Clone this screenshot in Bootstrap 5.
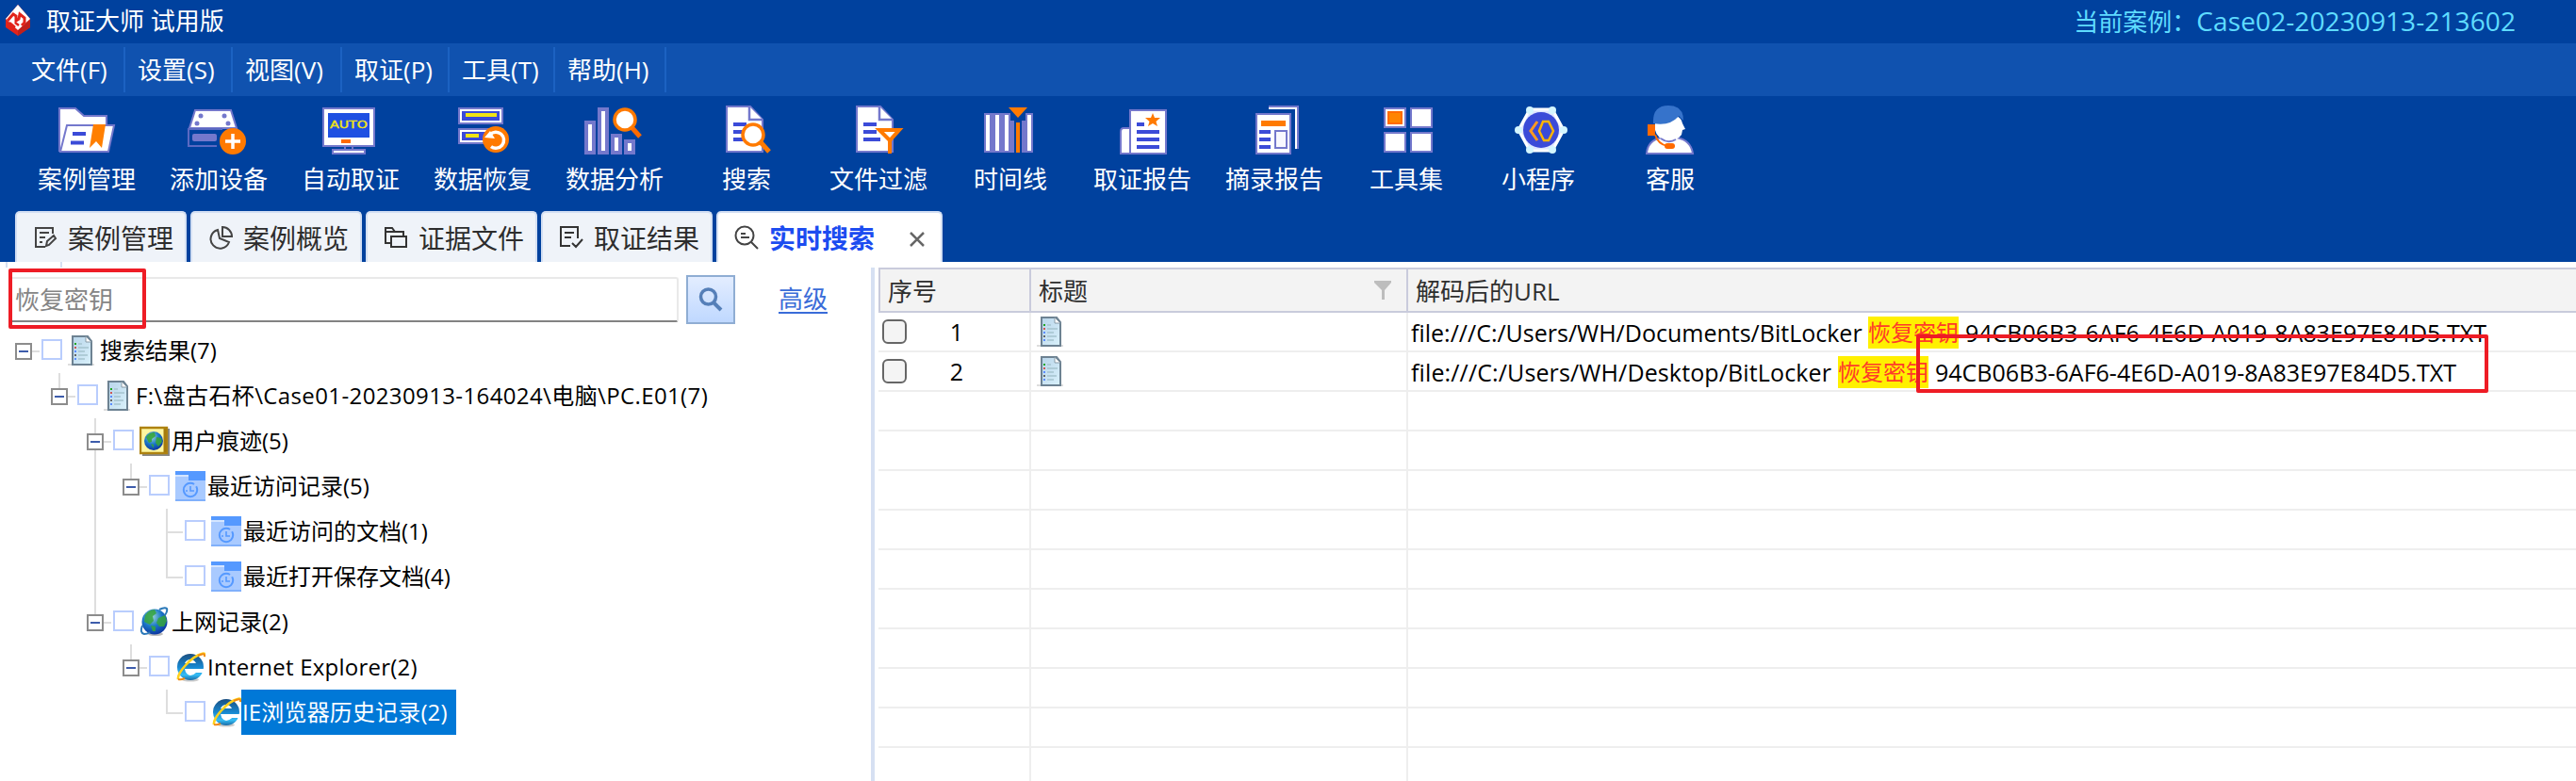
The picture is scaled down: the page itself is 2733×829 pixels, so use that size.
<!DOCTYPE html>
<html lang="zh-CN">
<head>
<meta charset="utf-8">
<title>取证大师 试用版</title>
<link rel="stylesheet" href="https://cdn.jsdelivr.net/npm/bootstrap@5.3.0/dist/css/bootstrap.min.css">
<style>
body{font-family:"Open Sans","Noto Sans CJK SC",sans-serif;font-size:24px;line-height:1;color:#000;width:2733px;height:829px;overflow:hidden;background:#fff}
svg{display:block;flex:none}
.lbl{white-space:pre;line-height:30px}
.titlebar{height:46px;background:#00419e;font-size:26px;color:#fff;padding:0 64px 2px 5px}
.casename{color:#5fdcff}
.casename b{font-weight:400;font-size:28px;letter-spacing:.1px}
.menubar{height:56px;background:#1052af;color:#fff;font-size:26px;padding:4px 0 4px 20px}
.menubar .mi{border-right:2px solid #1c62c2;padding-left:13px;height:48px}
.toolbar{height:122px;background:#00419e;padding:8px 0 0 22px;color:#fff;font-size:26px}
.toolbar .tool{width:140px}
.toolbar .lbl{margin-top:1px}
.tabbar{height:54px;background:#00419e;padding-left:16px;gap:4px}
.tabbar .tb{width:182px;height:54px;background:#eff3f9;border:2px solid #d3dff3;border-bottom:0;border-radius:5px 5px 0 0;font-size:28px;color:#2d2d2d;padding-left:17px}
.tabbar .tb svg{margin-right:11px}
.tabbar .lbl{padding-top:2px}
.tabbar .tb.on{width:240px;background:#fff;color:#1c4cf0;font-weight:700}
.side{width:924px;height:551px}
.stubs{height:6px;padding-left:6px;gap:56px}
.stubs i{width:2px;background:#d6e0f2}
.searchrow{padding:8px 0 0 9px;height:64px}
.field{width:711px;height:48px;margin-top:2px;border:2px solid #e9e9e9;border-bottom-color:#828282;border-radius:3px;color:#858585;font-size:26px;padding-left:5px}
.go{width:52px;height:52px;border:2px solid #8fadd3;border-radius:0;background:linear-gradient(#e3edff,#bfd8ff);margin-left:8px;padding:0}
.adv{color:#3a6cd8;font-size:26px;margin-left:46px;text-decoration:none;border-bottom:2px solid #3a6cd8;line-height:27px;margin-top:12px}
.tree{padding-left:16px}
.tn{height:48px}
.gd{width:38px;height:48px;position:relative;flex:none}
.nd{width:28px}
.gd.up::before,.gd.dn::after,.gd.full::before{content:"";position:absolute;left:8px;width:2px;background:#dedede}
.gd.up::before{top:0;height:24px}
.gd.dn::after{top:24px;height:24px}
.gd.full::before{top:0;height:48px}
.gd .stub{position:absolute;left:8px;top:24px;width:18px;height:2px;background:#dedede}
.gd .ex{position:absolute;z-index:1;left:0;top:16px;width:18px;height:18px;border:2px solid #8c8c8c;background:#fff}
.gd .ex::after{content:"";position:absolute;left:2px;top:6px;width:10px;height:2px;background:#3d5cab}
.cb{width:22px;height:22px;border:2px solid #b9cdfd;margin:0 6px 2px 0;flex:none}
.tn .lbl{margin-left:2px;height:48px;line-height:48px}
.tn .pick{background:#0078d7;color:#fff;width:228px;margin-left:0;padding-left:1px;letter-spacing:.15px}
.tn .path{letter-spacing:.38px}
.tn .app{letter-spacing:.22px}
.split{width:4px;height:545px;margin-top:6px;background:#d6e0f2}
.grid{margin:6px 0 0 4px;width:1801px;height:545px;overflow:hidden}
.gh{height:48px;background:#f3f3f3;border:solid #c9cbdc;border-width:2px 0 2px 2px;font-size:26px;color:#2f2f2f}
.gr{height:42px;border-bottom:2px solid #eee;font-size:25px}
.c1,.c2{border-right:2px solid #eee;flex:none;height:100%}
.c1{width:162px}.c2{width:400px}
.gh .c1,.gh .c2{border-color:#c9cbdc}
.gh .c1{width:160px}
.gh .c1,.gh .c3{padding-left:8px}.gh .c2{padding:0 16px 0 8px}
.gh .lbl{padding-top:2px}
.ck{width:26px;height:26px;border:2px solid #666;border-radius:6px;background:#f4f4f4;margin-left:4px}
.no{width:28px;margin-left:39px;text-align:center}
.gr .c2{padding-left:6px}
.gr .c3{padding-left:3px}
.gr .c3 .lbl{margin-top:2px}
.gr .c3 .src{width:478px}
.gr .c3 .src.alt{width:446px;letter-spacing:.13px}
.gr .c3 .hit{background:#fff000;color:#ff3b2a;font-size:24px;height:34px;line-height:33px;margin:2px 7px 0}
.frame{position:absolute;border:4px solid #ee1c25;border-radius:2px;z-index:5}
.frame.query{left:9px;top:285px;width:146px;height:64px}
.frame.key{left:2033px;top:355px;width:607px;height:62px}
</style>
</head>
<body>
<svg width="0" height="0" class="position-absolute">
<defs>
<linearGradient id="pg" x1="0" y1="0" x2="1" y2="1"><stop offset="0" stop-color="#b9d5ea"/><stop offset="1" stop-color="#d9f1fb"/></linearGradient>
<radialGradient id="gl" cx=".4" cy=".3" r=".75"><stop offset="0" stop-color="#9fd8d8"/><stop offset=".5" stop-color="#1b78c8"/><stop offset="1" stop-color="#0a2f9c"/></radialGradient>
<linearGradient id="ieg" x1="0" y1="0" x2="0" y2="1"><stop offset="0" stop-color="#1b4f80"/><stop offset=".5" stop-color="#1787d0"/><stop offset=".8" stop-color="#35bdf5"/><stop offset="1" stop-color="#1a6aa5"/></linearGradient>
<symbol id="doc" viewBox="0 0 32 32"><path d="M0 30h28v2H0z" fill="#ddd"/><path d="M5 1h16l4 5v25H5z" fill="url(#pg)" stroke="#6d8292" stroke-width="2"/><path d="M19 1v6h6z" fill="#fff" stroke="#8799a6"/><path d="M11 9h4M11 13h11M11 17h7M11 21h10M11 25h7" stroke="#a5c4ce" stroke-width="1.6"/><path d="M7 9h2" stroke="#22a522" stroke-width="2"/><path d="M7 13h2" stroke="#c55" stroke-width="2"/><path d="M7 17h2M7 25h2" stroke="#5a8cff" stroke-width="2"/><path d="M7 21h2" stroke="#666" stroke-width="2"/></symbol>
<symbol id="globe" viewBox="0 0 32 32"><ellipse cx="17" cy="29" rx="8" ry="2" fill="#bbb"/><circle cx="16" cy="16" r="13.5" fill="url(#gl)"/><path d="M6 9q4-6 10-6l2 4-4 3 1 5-4 4-6-3zM20 12l7-3 2 6-3 6-5 0-3-4zM12 20l5 1 0 5-3 0z" fill="#36a53c" opacity=".85"/><path d="M3 20q-3 8 2 9 3 0 6-2M21 3q6-3 8-1 1 3-2 7" fill="none" stroke="#2a78b8" stroke-width="2"/></symbol>
<symbol id="gbook" viewBox="0 0 32 32"><path d="M3 3h29v29H3z" fill="#888"/><path d="M1 2h28v27H1z" fill="#fdf6a0" stroke="#ae8210" stroke-width="2.4"/><path d="M27 3v25" stroke="#a67b0c" stroke-width="3"/><circle cx="15" cy="16" r="10" fill="url(#gl)"/><path d="M7 12q3-5 9-5l1 4-4 3 0 3-3 1zM18 12l5 1 1 4-4 5-3-4zM12 19l3 1 0 4z" fill="#36a53c" opacity=".9"/></symbol>
<symbol id="fold" viewBox="0 0 32 32"><path d="M0 0h32v32H0z" fill="#a9caff"/><path d="M0 0h32v10H14V5H0z" fill="#5599ff"/><path d="M0 4h14v2H0z" fill="#d4e5ff"/><path d="M0 30h32v2H0z" fill="#80b0fb"/><circle cx="16" cy="20" r="7.2" fill="none" stroke="#5599ff" stroke-width="2" stroke-dasharray="38 3"/><path d="M16 16v5h4M11 21h2" stroke="#5599ff" stroke-width="1.6" fill="none"/></symbol>
<symbol id="ie" viewBox="0 0 32 32"><ellipse cx="16" cy="29.5" rx="9" ry="2" fill="#ccc"/><circle cx="16" cy="16" r="14" fill="url(#ieg)"/><path d="M10 12q2-4 6-4t6 4z" fill="#fff"/><path d="M10 18h20v4h-8q-3 3-6 3-5-1-6-7z" fill="#fff"/><path d="M3 29q-1-5 8-15T28 2q4-2 3 3" fill="none" stroke="#ffd21e" stroke-width="2.6"/><path d="M3 29q3 1 7-1M24 4q8-4 7 1" fill="none" stroke="#f08a12" stroke-width="2"/></symbol>
</defs>
</svg>

<header class="titlebar d-flex align-items-center">
<svg width="28" height="34" viewBox="0 0 28 34"><path d="M14 0 27 15v9L14 33 1 24V15z" fill="#e2231a"/><path d="M14 26 27 15v9L14 33z" fill="#c0201b"/><path d="M14 0 27 15 14 27 1 15z" fill="#fff"/><path d="M3 17 9 10l3 2v5l3-2 1-5 5 4v5l-3 3" fill="none" stroke="#e2231a" stroke-width="3"/><path d="M5 19l6 5M11 19l4 3" stroke="#e2231a" stroke-width="2.5"/></svg>
<span class="lbl ms-3">取证大师 试用版</span>
<span class="lbl casename ms-auto">当前案例：<b>Case02-20230913-213602</b></span>
</header>

<nav class="menubar d-flex">
<div class="mi d-flex align-items-center" style="width:113px"><span class="lbl">文件(F)</span></div>
<div class="mi d-flex align-items-center" style="width:114px"><span class="lbl">设置(S)</span></div>
<div class="mi d-flex align-items-center" style="width:116px"><span class="lbl">视图(V)</span></div>
<div class="mi d-flex align-items-center" style="width:114px"><span class="lbl">取证(P)</span></div>
<div class="mi d-flex align-items-center" style="width:112px"><span class="lbl">工具(T)</span></div>
<div class="mi d-flex align-items-center" style="width:118px"><span class="lbl">帮助(H)</span></div>
</nav>

<section class="toolbar d-flex">
<div class="tool d-flex flex-column align-items-center"><svg width="80" height="64" viewBox="0 0 80 64"><path d="M11 51V5h17l9 8h24v10" fill="#fff" stroke="#7478cc" stroke-width="2"/><path d="M19 23h50l-6 28H12z" fill="#fff" stroke="#7478cc" stroke-width="2"/><path d="M25 32h14M23 41.5h14" stroke="#3b4bd8" stroke-width="4"/><path d="M47 22h13l-4 25-6-7-7 7z" fill="#ff7f00"/></svg><span class="lbl">案例管理</span></div>
<div class="tool d-flex flex-column align-items-center"><svg width="80" height="64" viewBox="0 0 80 64"><path d="M15 7h38l6 19H9z" fill="#fff" stroke="#7478cc" stroke-width="2"/><path d="M38 45H8V27h36" fill="none" stroke="#5b69c2" stroke-width="2"/><rect x="12" y="32" width="26" height="8" rx="2" fill="#7478cc"/><g fill="#7478cc"><circle cx="21" cy="13" r="2.5"/><circle cx="46" cy="13" r="2.5"/><circle cx="17" cy="21" r="2.5"/><circle cx="50" cy="21" r="2.5"/></g><circle cx="55" cy="40" r="14" fill="#ff7a00"/><path d="M55 32v16M47 40h16" stroke="#fff" stroke-width="3.5"/></svg><span class="lbl">添加设备</span></div>
<div class="tool d-flex flex-column align-items-center"><svg width="80" height="64" viewBox="0 0 80 64"><path d="M11 5h54v40H11z" fill="#fff" stroke="#7478cc" stroke-width="2"/><path d="M16 10h44v26H16z" fill="#1f50e2"/><text x="18" y="26" font-size="11" font-family="DejaVu Sans" fill="#f0e414" stroke="#f0e414" stroke-width=".4" textLength="40" lengthAdjust="spacingAndGlyphs">AUTO</text><path d="M30 38h10v4H30z" fill="#ff6a00"/><path d="M34 46v3M42 46v3" stroke="#7478cc" stroke-width="2"/><path d="M21 49h34v4H21z" fill="#fff" stroke="#7478cc" stroke-width="2"/></svg><span class="lbl">自动取证</span></div>
<div class="tool d-flex flex-column align-items-center"><svg width="80" height="64" viewBox="0 0 80 64"><path d="M15 5h46v16H15zM15 27h46v15H15z" fill="#3b4bd8" stroke="#7478cc" stroke-width="2"/><path d="M17 7h42v12H17zM17 29h30v11H17z" fill="#3b4bd8" stroke="#fff" stroke-width="2"/><path d="M22 12h33M22 34h14" stroke="#f0e414" stroke-width="4"/><circle cx="54" cy="38" r="14" fill="#ff7a00"/><path d="M55 47a8.500 8.500 0 1 0-9-9" fill="none" stroke="#fff" stroke-width="3.5" transform="rotate(40 54 38)"/><path d="M42 36l6-7 5 8z" fill="#fff"/></svg><span class="lbl">数据恢复</span></div>
<div class="tool d-flex flex-column align-items-center"><svg width="80" height="64" viewBox="0 0 80 64"><g fill="#fff" stroke="#7478cc" stroke-width="4"><path d="M10 20h8v32h-8zM24 6h8v46h-8zM38 34h8v18h-8zM52 40h8v12h-8z"/></g><path d="M58 25l9 10" stroke="#ff6a00" stroke-width="5"/><circle cx="51" cy="17" r="11" fill="#fff" stroke="#ff7a00" stroke-width="3.5"/></svg><span class="lbl">数据分析</span></div>
<div class="tool d-flex flex-column align-items-center"><svg width="80" height="64" viewBox="0 0 80 64"><path d="M19 3h25l13 14v34H19z" fill="#fff" stroke="#7478cc" stroke-width="2"/><path d="M43 3v14h14" fill="#fff" stroke="#7478cc" stroke-width="2.5"/><path d="M26 22h14M26 30h12M26 38h14" stroke="#3b4bd8" stroke-width="4"/><path d="M55 41l9 10" stroke="#ff7a00" stroke-width="5"/><circle cx="47" cy="33" r="11" fill="#fff" stroke="#ff7a00" stroke-width="3.5"/></svg><span class="lbl">搜索</span></div>
<div class="tool d-flex flex-column align-items-center"><svg width="80" height="64" viewBox="0 0 80 64"><path d="M17 3h25l13 14v34H17z" fill="#fff" stroke="#7478cc" stroke-width="2"/><path d="M41 3v14h14" fill="#fff" stroke="#7478cc" stroke-width="2.5"/><path d="M24 22h14M24 30h14M24 38h18" stroke="#3b4bd8" stroke-width="4"/><path d="M41 28h21L52 39z" fill="#fff" stroke="#ff7a00" stroke-width="4"/><path d="M52 38v15" stroke="#ff7a00" stroke-width="4"/></svg><span class="lbl">文件过滤</span></div>
<div class="tool d-flex flex-column align-items-center"><svg width="80" height="64" viewBox="0 0 80 64"><path d="M12 10h52v42H12z" fill="#7478cc"/><path d="M16 12v38M26 12v38M36 12v38M60 12v38" stroke="#fff" stroke-width="4"/><path d="M40 10h16v8h-4v34h-8V18h-4z" fill="#00419e"/><path d="M38 4h20L48 15z" fill="#ff7a00"/><path d="M48 20v32" stroke="#ff7a00" stroke-width="4"/></svg><span class="lbl">时间线</span></div>
<div class="tool d-flex flex-column align-items-center"><svg width="80" height="64" viewBox="0 0 80 64"><path d="M27 26h-7q-3 0-3 4v23h10z" fill="#fff" stroke="#7478cc" stroke-width="2"/><path d="M27 7h38v46H27z" fill="#fff" stroke="#7478cc" stroke-width="2"/><path d="M51 10l2 5h6l-4.500 4 1.500 5-5-3-5 3 1.500-5-4.500-4h6z" fill="#ff7a00"/><path d="M34 22h8M34 30h24M34 38h24M34 46h24" stroke="#3b4bd8" stroke-width="4"/></svg><span class="lbl">取证报告</span></div>
<div class="tool d-flex flex-column align-items-center"><svg width="80" height="64" viewBox="0 0 80 64"><path d="M34 3h31v45" fill="none" stroke="#7478cc" stroke-width="2"/><path d="M34 5h29v43" fill="none" stroke="#fff" stroke-width="2"/><path d="M21 11h36v42H21z" fill="#fff" stroke="#7478cc" stroke-width="2"/><path d="M26 21h26" stroke="#ff7a00" stroke-width="6"/><path d="M24 30h12M24 38h12M24 46h12" stroke="#3b4bd8" stroke-width="4"/><path d="M41 29h12v18H41z" fill="#f8f8ff" stroke="#7478cc" stroke-width="2"/></svg><span class="lbl">摘录报告</span></div>
<div class="tool d-flex flex-column align-items-center"><svg width="80" height="64" viewBox="0 0 80 64"><g fill="#fff" stroke="#7478cc" stroke-width="2"><path d="M17 5h22v20H17zM45 5h22v20H45zM17 31h22v20H17zM45 31h22v20H45z"/></g><path d="M21 9h14v12H21z" fill="#ff8400" stroke="#ff6a00" stroke-width="2"/></svg><span class="lbl">工具集</span></div>
<div class="tool d-flex flex-column align-items-center"><svg width="80" height="64" viewBox="0 0 80 64"><path d="M31 6h24l12 22-12 22H31L19 28z" fill="#dfe6ff" stroke="#fff" stroke-width="3"/><g fill="#d4f6ff"><circle cx="31" cy="7" r="4"/><circle cx="55" cy="7" r="4"/><circle cx="67" cy="28" r="4"/><circle cx="19" cy="28" r="4"/><circle cx="31" cy="49" r="4"/><circle cx="55" cy="49" r="4"/></g><circle cx="43" cy="28" r="19" fill="#3b4bd8"/><path d="M45 19h6l5 10-5 10h-5l-5-10z" fill="none" stroke="#ffb400" stroke-width="2.5"/><path d="M39 19l-7 10 7 10" fill="none" stroke="#ff9a20" stroke-width="3"/></svg><span class="lbl">小程序</span></div>
<div class="tool d-flex flex-column align-items-center"><svg width="80" height="64" viewBox="0 0 80 64"><path d="M15 53q1-14 16-17h16q15 3 17 17z" fill="#fff" stroke="#7478cc" stroke-width="2"/><path d="M24 20q13 1 22-7 6 2 7 8l3 6-3 1-1 5q-4 6-14 6-12-1-14-11z" fill="#fff"/><path d="M30 37q8 6 16 1" fill="none" stroke="#7478cc" stroke-width="2"/><path d="M22 21Q21 2 38 2q16 0 16 16l-5-5q-8 11-27 8z" fill="#3673cb"/><path d="M16 22h8v12h-8z" fill="#ff6a00"/><path d="M24 33q3 10 13 12" fill="none" stroke="#ff6a00" stroke-width="2"/><rect x="34" y="42" width="11" height="6" rx="3" fill="#ff6a00"/></svg><span class="lbl">客服</span></div>
</section>

<nav class="tabbar d-flex">
<div class="tb d-flex align-items-center"><svg width="26" height="26" viewBox="0 0 26 26" fill="none" stroke="#444" stroke-width="2"><path d="M21 9V3H3v20h10M7 8h10M7 13h6M7 18h3"/><path d="M14 22l1-5 7-6 2 3-7 7z"/></svg><span class="lbl">案例管理</span></div>
<div class="tb d-flex align-items-center"><svg width="26" height="26" viewBox="0 0 26 26" fill="none" stroke="#444" stroke-width="2"><path d="M10 5a10 10 0 1 0 12 13l-10-4z"/><path d="M15 2v10h10a10 10 0 0 0-10-10z"/></svg><span class="lbl">案例概览</span></div>
<div class="tb d-flex align-items-center"><svg width="26" height="26" viewBox="0 0 26 26" fill="none" stroke="#333" stroke-width="2"><path d="M7 19H2V3h7l3 4h9v4M2 7h10M8 12h16v11H8z"/></svg><span class="lbl">证据文件</span></div>
<div class="tb d-flex align-items-center"><svg width="26" height="26" viewBox="0 0 26 26" fill="none" stroke="#333" stroke-width="2"><path d="M12 22H2V2h18v12M6 8h10M6 13h7M14 19l4 4 7-8"/></svg><span class="lbl">取证结果</span></div>
<div class="tb on d-flex align-items-center"><svg width="26" height="26" viewBox="0 0 26 26" fill="none" stroke="#444" stroke-width="2"><circle cx="11" cy="11" r="9.5"/><path d="M7 9h5M7 13h9M18 18l7 7"/></svg><span class="lbl me-4">实时搜索</span><svg class="ms-2 mt-1 ps-0" width="24" height="16" viewBox="-5 0 24 16" stroke="#666" stroke-width="2.5"><path d="M1 1l14 14M15 1 1 15"/></svg></div>
</nav>

<main class="d-flex">
<aside class="side">
<div class="stubs d-flex"><i></i><i></i></div>
<div class="searchrow d-flex align-items-start">
<div class="field d-flex align-items-center"><span class="lbl">恢复密钥</span></div>
<button class="go btn d-flex align-items-center justify-content-center"><svg width="26" height="26" viewBox="0 0 26 26" fill="none" stroke="#557fb8" stroke-width="3.5"><circle cx="10.5" cy="10" r="8"/><path d="M16 16l8 8" stroke-width="4"/></svg></button>
<a class="adv">高级</a>
</div>
<div class="tree">
<div class="tn d-flex align-items-center"><div class="gd nd"><i class="ex"></i><i class="stub"></i></div><i class="cb"></i><svg width="32" height="32"><use href="#doc"/></svg><span class="lbl">搜索结果(7)</span></div>
<div class="tn d-flex align-items-center"><div class="gd"></div><div class="gd nd up"><i class="ex"></i><i class="stub"></i></div><i class="cb"></i><svg width="32" height="32"><use href="#doc"/></svg><span class="lbl path">F:\盘古石杯\Case01-20230913-164024\电脑\PC.E01(7)</span></div>
<div class="tn d-flex align-items-center"><div class="gd"></div><div class="gd"></div><div class="gd nd up dn"><i class="ex"></i><i class="stub"></i></div><i class="cb"></i><svg width="32" height="32"><use href="#gbook"/></svg><span class="lbl">用户痕迹(5)</span></div>
<div class="tn d-flex align-items-center"><div class="gd"></div><div class="gd"></div><div class="gd full"></div><div class="gd nd up"><i class="ex"></i><i class="stub"></i></div><i class="cb"></i><svg width="32" height="32"><use href="#fold"/></svg><span class="lbl">最近访问记录(5)</span></div>
<div class="tn d-flex align-items-center"><div class="gd"></div><div class="gd"></div><div class="gd full"></div><div class="gd"></div><div class="gd nd full"><i class="stub"></i></div><i class="cb"></i><svg width="32" height="32"><use href="#fold"/></svg><span class="lbl">最近访问的文档(1)</span></div>
<div class="tn d-flex align-items-center"><div class="gd"></div><div class="gd"></div><div class="gd full"></div><div class="gd"></div><div class="gd nd up"><i class="stub"></i></div><i class="cb"></i><svg width="32" height="32"><use href="#fold"/></svg><span class="lbl">最近打开保存文档(4)</span></div>
<div class="tn d-flex align-items-center"><div class="gd"></div><div class="gd"></div><div class="gd nd up"><i class="ex"></i><i class="stub"></i></div><i class="cb"></i><svg width="32" height="32"><use href="#globe"/></svg><span class="lbl">上网记录(2)</span></div>
<div class="tn d-flex align-items-center"><div class="gd"></div><div class="gd"></div><div class="gd"></div><div class="gd nd up"><i class="ex"></i><i class="stub"></i></div><i class="cb"></i><svg width="32" height="32"><use href="#ie"/></svg><span class="lbl app">Internet Explorer(2)</span></div>
<div class="tn d-flex align-items-center"><div class="gd"></div><div class="gd"></div><div class="gd"></div><div class="gd"></div><div class="gd nd up"><i class="stub"></i></div><i class="cb"></i><svg width="32" height="32"><use href="#ie"/></svg><span class="lbl pick">IE浏览器历史记录(2)</span></div>
</div>
</aside>
<div class="split"></div>
<section class="grid">
<div class="gh d-flex"><div class="c1 d-flex align-items-center"><span class="lbl">序号</span></div><div class="c2 d-flex align-items-center justify-content-between"><span class="lbl">标题</span><svg width="18" height="20" viewBox="0 0 18 20"><path d="M0 0h18v2l-7 8v10H8V10L0 2z" fill="#bdbdbd"/></svg></div><div class="c3 d-flex align-items-center"><span class="lbl">解码后的URL</span></div></div>
<div class="gr d-flex"><div class="c1 d-flex align-items-center"><i class="ck"></i><span class="lbl no">1</span></div><div class="c2 d-flex align-items-center"><svg width="32" height="32"><use href="#doc"/></svg></div><div class="c3 d-flex align-items-center"><span class="lbl src">file:///C:/Users/WH/Documents/BitLocker</span><span class="lbl hit">恢复密钥</span><span class="lbl">94CB06B3-6AF6-4E6D-A019-8A83E97E84D5.TXT</span></div></div>
<div class="gr d-flex"><div class="c1 d-flex align-items-center"><i class="ck"></i><span class="lbl no">2</span></div><div class="c2 d-flex align-items-center"><svg width="32" height="32"><use href="#doc"/></svg></div><div class="c3 d-flex align-items-center"><span class="lbl src alt">file:///C:/Users/WH/Desktop/BitLocker</span><span class="lbl hit">恢复密钥</span><span class="lbl">94CB06B3-6AF6-4E6D-A019-8A83E97E84D5.TXT</span></div></div>
<div class="gr d-flex"><div class="c1"></div><div class="c2"></div></div>
<div class="gr d-flex"><div class="c1"></div><div class="c2"></div></div>
<div class="gr d-flex"><div class="c1"></div><div class="c2"></div></div>
<div class="gr d-flex"><div class="c1"></div><div class="c2"></div></div>
<div class="gr d-flex"><div class="c1"></div><div class="c2"></div></div>
<div class="gr d-flex"><div class="c1"></div><div class="c2"></div></div>
<div class="gr d-flex"><div class="c1"></div><div class="c2"></div></div>
<div class="gr d-flex"><div class="c1"></div><div class="c2"></div></div>
<div class="gr d-flex"><div class="c1"></div><div class="c2"></div></div>
<div class="gr d-flex"><div class="c1"></div><div class="c2"></div></div>
</section>
</main>
<div class="frame query"></div>
<div class="frame key"></div>
<script src="https://cdn.jsdelivr.net/npm/bootstrap@5.3.0/dist/js/bootstrap.bundle.min.js"></script>
</body>
</html>
